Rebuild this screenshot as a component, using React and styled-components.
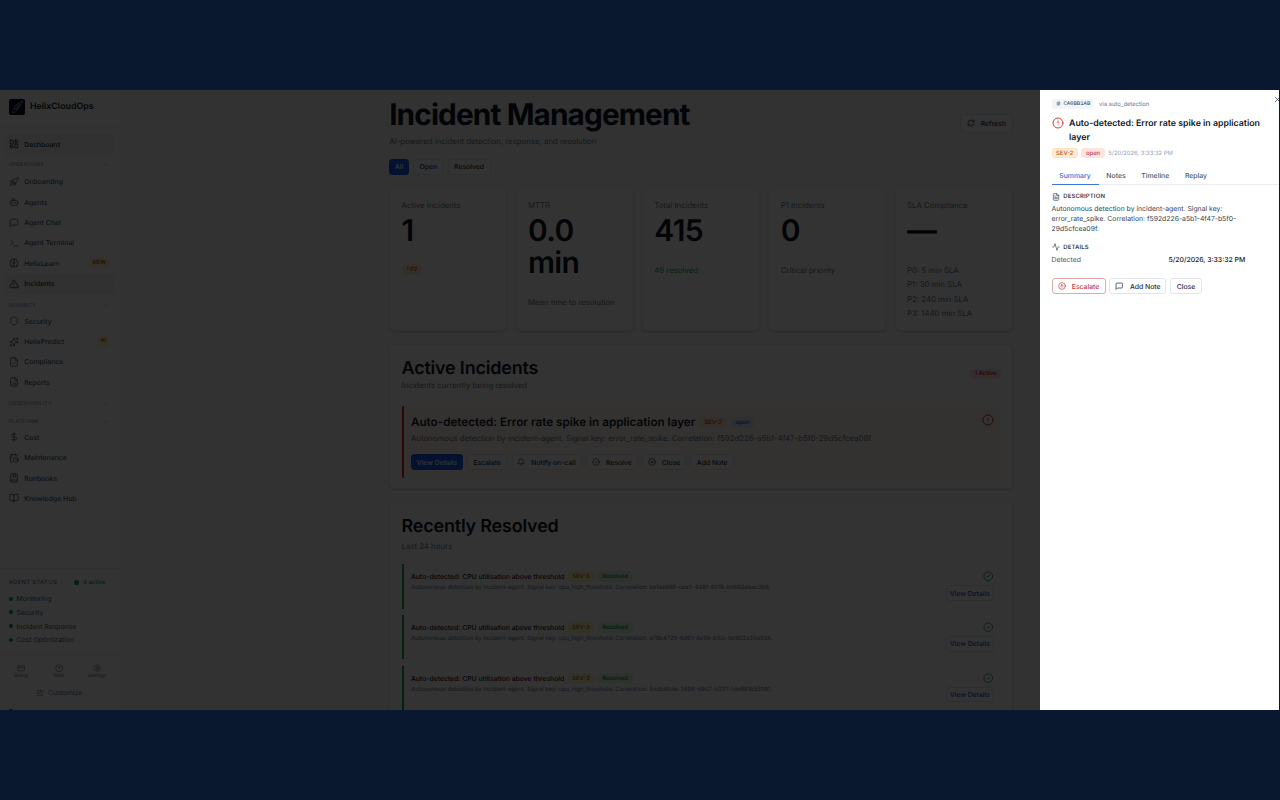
import React from "react"
import styled, { createGlobalStyle } from "styled-components"
import {
  Activity,
  Bell,
  BookMarked,
  BookOpen,
  Bot,
  Brain,
  CalendarClock,
  ChevronDown,
  ChevronRight,
  CircleAlert,
  CircleArrowUp,
  CircleCheck,
  CircleHelp,
  CircleX,
  CreditCard,
  DollarSign,
  FileChartColumn,
  FileCheck,
  FileText,
  Hash,
  LayoutDashboard,
  RefreshCw,
  Rocket,
  Settings,
  Shield,
  SlidersHorizontal,
  Sparkles,
  Terminal,
  TriangleAlert,
  X,
} from "lucide-react"

const GlobalStyle = createGlobalStyle`
  * {
    box-sizing: border-box;
    margin: 0;
    padding: 0;
  }

  body {
    background: #09182f;
    color: #0f172a;
    font-family: Inter, "Liberation Sans", sans-serif;
    text-rendering: geometricPrecision;
    overflow: hidden;
  }

  button {
    text-rendering: inherit;
  }

  svg {
    display: block;
    flex: none;
  }
`

const Stage = styled.div`
  width: 1280px;
  height: 800px;
  padding: 90px 1px 90px 0;
`

const Screen = styled.div`
  position: relative;
  display: flex;
  height: 620px;
  overflow: hidden;
  background: #fbfcfc;
`

const Backdrop = styled.div`
  position: absolute;
  inset: 0;
  background: rgba(0, 0, 0, 0.8);
`

/* ---------- sidebar ---------- */

const Sidebar = styled.aside`
  display: flex;
  flex-direction: column;
  flex: none;
  width: 121.5px;
  height: 630px;
  background: #fff;
  border-right: 1px solid #eef1f5;
`

const Brand = styled.div`
  display: flex;
  align-items: center;
  gap: 5.5px;
  height: 36.5px;
  padding: 0 0 2.4px 8.5px;
  border-bottom: 1px solid #eef1f5;
  font-size: 8.8px;
  font-weight: 600;
`

const Nav = styled.nav`
  flex: 1;
  padding: 7.7px 5.5px 0 3.5px;
`

const NavItem = styled.div`
  display: flex;
  align-items: center;
  gap: 5.7px;
  height: 20.4px;
  padding: 0 6px 0 5px;
  border-radius: 3px;
  background: ${(p) => (p.$active ? "#f3f4f5" : "transparent")};
  color: ${(p) => (p.$active ? "#1e293b" : "#475569")};
  font-size: 6.9px;
  font-weight: 500;

  span {
    flex: 1;
  }
`

const NavTag = styled.em`
  padding: 1.6px 3px;
  border-radius: 3px;
  background: #fef3c7;
  color: #b45309;
  font-size: 5.6px;
  font-style: normal;
  font-weight: 600;
  line-height: 7px;
`

const NavHeading = styled.div`
  display: flex;
  align-items: center;
  justify-content: space-between;
  height: ${(p) => p.$h}px;
  padding: ${(p) => p.$top}px 6.5px 0 5px;
  color: #94a3b8;
  font-size: 5.1px;
  font-weight: 600;
  letter-spacing: 0.05em;
  text-transform: uppercase;
`

const AgentStatus = styled.div`
  height: 85.5px;
  padding: 7.3px 15px 0 8.5px;
  border-top: 1px solid #e8ecf1;
`

const AgentHead = styled.div`
  display: flex;
  align-items: center;
  justify-content: space-between;
  height: 12px;
  margin-bottom: 3.3px;
  color: #64748b;
  font-size: 5.95px;
  font-weight: 500;
  letter-spacing: 0.05em;
`

const Active = styled.span`
  display: flex;
  align-items: center;
  gap: 3.5px;
  color: #16a34a;
  letter-spacing: 0;
`

const Dot = styled.i`
  width: ${(p) => p.$size || 4}px;
  height: ${(p) => p.$size || 4}px;
  border-radius: 50%;
  background: ${(p) => p.$color || "#00a63e"};
`

const AgentRow = styled.div`
  display: flex;
  align-items: center;
  gap: 4px;
  height: 13.65px;
  color: #475569;
  font-size: 6.85px;
`

const FooterLinks = styled.div`
  display: flex;
  justify-content: space-between;
  height: 30px;
  padding: 8.8px 14.5px 0 12px;
  border-top: 1px solid #e8ecf1;
  color: #64748b;
  font-size: 4.9px;
`

const FooterLink = styled.div`
  display: flex;
  flex-direction: column;
  align-items: center;
  gap: 1px;
  width: 18px;
  line-height: 7px;
`

const Customize = styled.div`
  display: flex;
  align-items: center;
  justify-content: center;
  gap: 4px;
  height: 18px;
  padding-right: 2px;
  color: #64748b;
  font-size: 6.8px;
`

const UserRow = styled.div`
  display: flex;
  height: 18.2px;
  padding: 6.8px 8.5px 0;
`

/* ---------- main column ---------- */

const Main = styled.main`
  flex: 1;
  height: 620px;
  padding-left: 1.3px;
  overflow: hidden;
  background: linear-gradient(90deg, #fafafa 0%, #fafafa 70%, #f4fafa 100%);
`

const Content = styled.div`
  width: 623.5px;
  margin: 0 auto;
  padding-top: 9.4px;
`

const Row = styled.div`
  display: flex;
  align-items: ${(p) => p.$align || "center"};
  justify-content: ${(p) => p.$justify || "flex-start"};
  gap: ${(p) => p.$gap || 0}px;
`

const PageTitle = styled.h1`
  margin-bottom: 0.7px;
  font-size: 29.8px;
  font-weight: 700;
  letter-spacing: -0.03em;
  line-height: 33px;
`

const Muted = styled.p`
  color: #64748b;
  font-size: 7.82px;
  line-height: ${(p) => p.$line || 12}px;
`

const Button = styled.button`
  display: flex;
  align-items: center;
  justify-content: center;
  gap: 6px;
  width: ${(p) => p.$w}px;
  height: ${(p) => p.$h || 15.5}px;
  border: 0.6px solid ${(p) => (p.$primary ? "#1d59ec" : "#e2e5ea")};
  border-radius: 3px;
  background: ${(p) => (p.$primary ? "#1d59ec" : "#fff")};
  color: ${(p) => (p.$primary ? "#fff" : p.$color || "#1e293b")};
  font-family: inherit;
  font-size: 6.83px;
  font-weight: 500;
  white-space: nowrap;
`

const RefreshButton = styled(Button)`
  margin-bottom: 1.6px;
`

const Filters = styled.div`
  display: flex;
  gap: 4.2px;
  margin: 10px 0 12.4px;
`

const Stats = styled.div`
  display: grid;
  grid-template-columns: repeat(5, 1fr);
  gap: 8.4px;
`

const Card = styled.section`
  border: 0.6px solid #e8edf3;
  border-radius: 5px;
  background: #fff;
  box-shadow: 0 1px 2px rgba(15, 23, 42, 0.16);
`

const StatCard = styled(Card)`
  display: flex;
  flex-direction: column;
  align-items: flex-start;
  height: 144.5px;
  padding: 11px 11.4px;
`

const StatValue = styled.div`
  margin: 3.6px 0 16.1px;
  font-size: 30px;
  font-weight: 600;
  letter-spacing: -0.02em;
  line-height: 32.2px;
`

const Badge = styled.span`
  display: inline-flex;
  align-items: center;
  height: 10.6px;
  padding: 0 ${(p) => (p.$line ? 3.6 : 4.6)}px;
  border: ${(p) => (p.$line ? `1px solid ${p.$line}` : "0")};
  border-radius: 3px;
  background: ${(p) => p.$bg};
  color: ${(p) => p.$fg};
  font-size: 5.85px;
  font-weight: 500;
  white-space: nowrap;
`

const Panel = styled(Card)`
  height: ${(p) => p.$h}px;
  margin-top: 12.2px;
  padding: 12.1px 10.7px 0 11.4px;
`

const PanelTitle = styled.h2`
  font-size: 17.95px;
  font-weight: 600;
  letter-spacing: -0.01em;
  line-height: 23.4px;
`

const Alert = styled.article`
  display: flex;
  justify-content: space-between;
  height: 72px;
  margin-top: 14.5px;
  padding: 8.3px 7px 0 7.4px;
  border-left: 2px solid #dc2626;
  border-radius: 1px 3px 3px 1px;
  background: #fff7ed;
`

const AlertTitle = styled.h3`
  font-size: 11.7px;
  font-weight: 600;
  line-height: 17px;
`

const Resolved = styled.article`
  display: flex;
  justify-content: space-between;
  height: 44.4px;
  margin-bottom: 6.3px;
  padding: 7px 7.4px 0 7.4px;
  border-left: 2px solid #16a34a;
`

const ResolvedTitle = styled.h4`
  font-size: 6.83px;
  font-weight: 500;
  line-height: 11px;
`

const Small = styled.p`
  color: #64748b;
  font-size: 5.85px;
  line-height: 11px;
`

const Side = styled.div`
  display: flex;
  flex-direction: column;
  align-items: flex-end;
  gap: 3.7px;
`

/* ---------- drawer ---------- */

const Drawer = styled.aside`
  position: absolute;
  top: 0;
  right: 0;
  width: 239.5px;
  height: 620px;
  padding: 8.5px 0 0 12px;
  background: #fff;
  color: #334155;
`

const CloseIcon = styled(X)`
  position: absolute;
  top: 4.5px;
  right: -3px;
  color: #334155;
`

const Code = styled.span`
  display: flex;
  align-items: center;
  gap: 2.4px;
  width: 41.5px;
  height: 9.8px;
  padding-left: 4.5px;
  border-radius: 2.5px;
  background: #f1f5f9;
  color: #334155;
  font-family: "Liberation Mono", monospace;
  font-size: 5.6px;
`

const DrawerTitle = styled.h2`
  width: 200px;
  color: #0f172a;
  font-size: 8.8px;
  font-weight: 600;
  line-height: 13.6px;
`

const Tabs = styled.div`
  display: flex;
  height: 19.5px;
  margin-top: 6.8px;
  border-bottom: 1px solid #e9edf2;
`

const Tab = styled.div`
  height: 19.5px;
  padding: 0 7.8px;
  border-bottom: 1px solid ${(p) => (p.$on ? "#3b74dc" : "transparent")};
  color: ${(p) => (p.$on ? "#3068d8" : "#475569")};
  font-size: 6.88px;
  font-weight: 500;
  line-height: 21px;
`

const SectionTitle = styled.h3`
  display: flex;
  align-items: center;
  gap: 3.8px;
  height: 9px;
  color: #334155;
  font-size: 5.95px;
  font-weight: 600;
  letter-spacing: 0.025em;
`

const Body = styled.p`
  width: 200px;
  margin: 3.2px 0 8.7px;
  font-size: 6.85px;
  line-height: 9.9px;
`

const Detail = styled.div`
  display: grid;
  grid-template-columns: 117px 1fr;
  height: 9px;
  margin: 3.8px 0 13.8px;
  color: #475569;
  font-size: 6.85px;
  line-height: 9px;

  b {
    color: #0f172a;
    font-weight: 500;
  }
`

const EscalateButton = styled(Button)`
  border-color: #e3a9a9;
  color: #c03a3a;
`

const Message = ({ size }) => (
  <svg
    width={size}
    height={size}
    viewBox="0 0 24 24"
    fill="none"
    stroke="currentColor"
    strokeWidth="2"
    strokeLinecap="round"
    strokeLinejoin="round"
  >
    <path d="M21 15a2 2 0 0 1-2 2H7l-4 4V5a2 2 0 0 1 2-2h14a2 2 0 0 1 2 2z" />
  </svg>
)

const Logo = () => (
  <svg width="16" height="16" viewBox="0 0 16 16">
    <rect width="16" height="16" rx="2" fill="#0b1020" />
    <g fill="none" stroke="#8296b8" strokeWidth="0.8">
      <path d="M3 14c1-5 3-3 5-6s2-5 6-6M4 14c4-1 3-3 5-6s4-3 5-6" />
      <ellipse cx="8.5" cy="7.5" rx="3.5" ry="2.2" transform="rotate(-45 8.5 7.5)" />
    </g>
  </svg>
)

const sections = [
  {
    title: "Operations",
    h: 17,
    top: 4,
    items: [
      { label: "Onboarding", icon: Rocket },
      { label: "Agents", icon: Bot },
      { label: "Agent Chat", icon: Message },
      { label: "Agent Terminal", icon: Terminal },
      { label: "HelixLearn", icon: Brain, tag: "NEW" },
      { label: "Incidents", icon: TriangleAlert, active: true },
    ],
  },
  {
    title: "Security",
    h: 17,
    top: 6.8,
    items: [
      { label: "Security", icon: Shield },
      { label: "HelixPredict", icon: Sparkles, tag: "AI" },
      { label: "Compliance", icon: FileCheck },
      { label: "Reports", icon: FileChartColumn },
    ],
  },
  { title: "Observability", h: 17, top: 6.8, closed: true, items: [] },
  {
    title: "Platform",
    h: 17.6,
    top: 6.5,
    items: [
      { label: "Cost", icon: DollarSign },
      { label: "Maintenance", icon: CalendarClock },
      { label: "Runbooks", icon: BookMarked },
      { label: "Knowledge Hub", icon: BookOpen },
    ],
  },
]

const agents = ["Monitoring", "Security", "Incident Response", "Cost Optimization"]

const resolved = [
  "ba1aa998-cea5-448f-9018-be662abac368",
  "a78b4725-6d61-4e56-b10c-be902a30a534",
  "5edb46ab-3406-4907-b227-fde891b55081",
]

const Stat = ({ label, value, children }) => (
  <StatCard>
    <Muted>{label}</Muted>
    <StatValue>{value}</StatValue>
    {children}
  </StatCard>
)

const SideNav = () => (
  <Sidebar>
    <Brand>
      <Logo />
      HelixCloudOps
    </Brand>
    <Nav>
      <NavItem $active>
        <LayoutDashboard size={10} />
        <span>Dashboard</span>
      </NavItem>
      {sections.map((s) => (
        <React.Fragment key={s.title}>
          <NavHeading $h={s.h} $top={s.top}>
            {s.title}
            {s.closed ? <ChevronRight size={6} /> : <ChevronDown size={6} />}
          </NavHeading>
          {s.items.map(({ label, icon: Icon, tag, active }) => (
            <NavItem key={label} $active={active}>
              <Icon size={10} />
              <span>{label}</span>
              {tag && <NavTag>{tag}</NavTag>}
            </NavItem>
          ))}
        </React.Fragment>
      ))}
    </Nav>
    <AgentStatus>
      <AgentHead>
        AGENT STATUS
        <Active>
          <Dot $size={5} />4 active
        </Active>
      </AgentHead>
      {agents.map((a) => (
        <AgentRow key={a}>
          <Dot />
          {a}
        </AgentRow>
      ))}
    </AgentStatus>
    <FooterLinks>
      <FooterLink>
        <CreditCard size={8.5} />
        Billing
      </FooterLink>
      <FooterLink>
        <CircleHelp size={8.5} />
        Help
      </FooterLink>
      <FooterLink>
        <Settings size={8.5} />
        Settings
      </FooterLink>
    </FooterLinks>
    <Customize>
      <SlidersHorizontal size={8} />
      Customize
    </Customize>
    <UserRow>
      <Dot $color="#334155" />
    </UserRow>
  </Sidebar>
)

const Incidents = () => (
  <Main>
    <Content>
      <Row $justify="space-between">
        <div>
          <PageTitle>Incident Management</PageTitle>
          <Muted $line={16}>AI-powered incident detection, response, and resolution</Muted>
        </div>
        <RefreshButton $w={52.5} $h={19.5}>
          <RefreshCw size={8} />
          Refresh
        </RefreshButton>
      </Row>
      <Filters>
        <Button $w={20} $primary>
          All
        </Button>
        <Button $w={30}>Open</Button>
        <Button $w={43}>Resolved</Button>
      </Filters>
      <Stats>
        <Stat label="Active Incidents" value="1">
          <Badge $bg="#ffedd4" $fg="#ca3500" style={{ marginTop: 1.5 }}>
            1 P2
          </Badge>
        </Stat>
        <Stat label="MTTR" value="0.0 min">
          <Muted $line={14.5}>Mean time to resolution</Muted>
        </Stat>
        <Stat label="Total Incidents" value="415">
          <Muted $line={14.5} style={{ color: "#16a34a" }}>
            49 resolved
          </Muted>
        </Stat>
        <Stat label="P1 Incidents" value="0">
          <Muted $line={14.5}>Critical priority</Muted>
        </Stat>
        <Stat label="SLA Compliance" value="—">
          <Muted $line={14.5}>P0: 5 min SLA</Muted>
          <Muted $line={14.5}>P1: 30 min SLA</Muted>
          <Muted $line={14.5}>P2: 240 min SLA</Muted>
          <Muted $line={14.5}>P3: 1440 min SLA</Muted>
        </Stat>
      </Stats>
      <Panel $h={145.7}>
        <Row $justify="space-between">
          <div>
            <PanelTitle>Active Incidents</PanelTitle>
            <Muted $line={11}>Incidents currently being resolved</Muted>
          </div>
          <Badge $bg="#ffe2e2" $fg="#c10007">
            1 Active
          </Badge>
        </Row>
        <Alert>
          <div>
            <Row $gap={4.5}>
              <AlertTitle>Auto-detected: Error rate spike in application layer</AlertTitle>
              <Badge $bg="#ffedd4" $fg="#ca3500">
                SEV-2
              </Badge>
              <Badge $bg="#dbeafe" $fg="#1447e6">
                open
              </Badge>
            </Row>
            <Muted $line={15}>
              Autonomous detection by incident-agent. Signal key: error_rate_spike. Correlation:
              f592d226-a5b1-4f47-b5f0-29d5cfcea09f.
            </Muted>
            <Row $gap={4.3} style={{ marginTop: 8.3 }}>
              <Button $w={52} $primary>
                View Details
              </Button>
              <Button $w={40}>Escalate</Button>
              <Button $w={70}>
                <Bell size={8} />
                Notify on-call
              </Button>
              <Button $w={52}>
                <CircleCheck size={8} />
                Resolve
              </Button>
              <Button $w={44}>
                <CircleX size={8} />
                Close
              </Button>
              <Button $w={43.5}>Add Note</Button>
            </Row>
          </div>
          <CircleAlert size={12} color="#dc2626" />
        </Alert>
      </Panel>
      <Panel $h={260}>
        <PanelTitle>Recently Resolved</PanelTitle>
        <Muted $line={15} style={{ margin: "0.5px 0 10.7px" }}>
          Last 24 hours
        </Muted>
        {resolved.map((id) => (
          <Resolved key={id}>
            <div>
              <Row $gap={3.4}>
                <ResolvedTitle>Auto-detected: CPU utilisation above threshold</ResolvedTitle>
                <Badge $bg="#fef9c2" $fg="#a65f00">
                  SEV-3
                </Badge>
                <Badge $bg="#dcfce7" $fg="#008236">
                  Resolved
                </Badge>
              </Row>
              <Small>
                Autonomous detection by incident-agent. Signal key: cpu_high_threshold. Correlation:{" "}
                {id}.
              </Small>
            </div>
            <Side>
              <CircleCheck size={10.5} color="#16a34a" />
              <Button $w={47.5} $color="#1d4ed8">
                View Details
              </Button>
            </Side>
          </Resolved>
        ))}
      </Panel>
    </Content>
  </Main>
)

const IncidentDrawer = () => (
  <Drawer>
    <CloseIcon size={9} />
    <Row $gap={6}>
      <Code>
        <Hash size={5} />
        CA0BB1AB
      </Code>
      <Small>via auto_detection</Small>
    </Row>
    <Row $gap={5.5} $align="flex-start" style={{ marginTop: 7.9 }}>
      <CircleAlert size={12} color="#d63c3c" />
      <DrawerTitle>Auto-detected: Error rate spike in application layer</DrawerTitle>
    </Row>
    <Row $gap={3.5} style={{ marginTop: 3 }}>
      <Badge $bg="#ffedd4" $fg="#c2501f" $line="#fde0bd">
        SEV-2
      </Badge>
      <Badge $bg="#ffe2e2" $fg="#c03a3a">
        open
      </Badge>
      <Small style={{ color: "#94a3b8" }}>5/20/2026, 3:33:32 PM</Small>
    </Row>
    <Tabs>
      <Tab $on>Summary</Tab>
      <Tab>Notes</Tab>
      <Tab>Timeline</Tab>
      <Tab>Replay</Tab>
    </Tabs>
    <SectionTitle style={{ marginTop: 7.2 }}>
      <FileText size={8} />
      DESCRIPTION
    </SectionTitle>
    <Body>
      Autonomous detection by incident-agent. Signal key: error_rate_spike. Correlation:
      f592d226-a5b1-4f47-b5f0-29d5cfcea09f.
    </Body>
    <SectionTitle>
      <Activity size={8} />
      DETAILS
    </SectionTitle>
    <Detail>
      Detected
      <b>5/20/2026, 3:33:32 PM</b>
    </Detail>
    <Row $gap={3.8}>
      <EscalateButton $w={54.2}>
        <CircleArrowUp size={8} />
        Escalate
      </EscalateButton>
      <Button $w={57}>
        <Message size={8.5} />
        Add Note
      </Button>
      <Button $w={31.5}>Close</Button>
    </Row>
  </Drawer>
)

const App = () => (
  <Stage>
    <GlobalStyle />
    <Screen>
      <SideNav />
      <Incidents />
      <Backdrop />
      <IncidentDrawer />
    </Screen>
  </Stage>
)

export default App
